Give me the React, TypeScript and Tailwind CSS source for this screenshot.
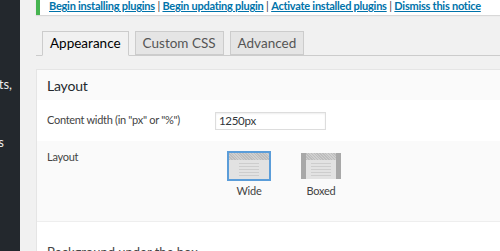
import React from "react"

const font = { fontFamily: 'Lato, "Liberation Sans", sans-serif' }

const Thumb = ({ boxed, active }: { boxed?: boolean; active?: boolean }) => (
  <div
    className={`w-[44px] h-[30px] p-[2px] ${active ? "bg-[#5b9dd9]" : "bg-transparent"}`}
  >
    <div className="relative w-full h-full bg-[#e2e2e2] overflow-hidden">
      {boxed && (
        <>
          <div className="absolute left-0 top-0 bottom-0 w-[5px] bg-[#a8a8a8]" />
          <div className="absolute right-0 top-0 bottom-0 w-[5px] bg-[#a8a8a8]" />
        </>
      )}
      <div
        className={`absolute top-0 h-[7px] bg-[#c4c4c4] ${boxed ? "left-[5px] right-[5px]" : "left-0 right-0"}`}
        style={{
          backgroundImage:
            "repeating-linear-gradient(45deg, #bdbdbd 0 1px, #cfcfcf 1px 2px)",
        }}
      />
      <div className="absolute left-[10px] right-[10px] top-[10px] flex flex-col gap-[2px]">
        {[0, 1, 2, 3, 4].map((i) => (
          <div key={i} className="h-[1px] bg-[#cdcdcd]" />
        ))}
      </div>
    </div>
  </div>
)

export default function App() {
  return (
    <div
      className="flex w-[500px] h-[251px] overflow-hidden bg-[#f1f1f1] text-[#444]"
      style={font}
    >
      {/* admin sidebar edge */}
      <div className="w-[20px] shrink-0 bg-[#23282d] text-[#eee] text-[13px] overflow-hidden">
        <div className="flex justify-end pr-[8px] mt-[75px] whitespace-nowrap">accounts,</div>
        <div className="flex justify-end pr-[16px] mt-[38px] whitespace-nowrap">Settings</div>
      </div>

      <div className="flex-1 min-w-0 pl-[16px]">
        {/* notice */}
        <div className="-mt-[10px] h-[25px] bg-white border-l-4 border-[#46b450] shadow-[0_1px_1px_rgba(0,0,0,0.1)] pl-[9px] flex items-end pb-[4px]">
          <p className="text-[11px] font-bold tracking-[-0.25px] text-[#0073aa] whitespace-nowrap leading-none">
            <span className="underline">Begin installing plugins</span>
            <span className="text-[#444] font-normal"> | </span>
            <span className="underline">Begin updating plugin</span>
            <span className="text-[#444] font-normal"> | </span>
            <span className="underline">Activate installed plugins</span>
            <span className="text-[#444] font-normal"> | </span>
            <span className="underline">Dismiss this notice</span>
          </p>
        </div>

        {/* tabs */}
        <div className="mt-[16px] flex items-end gap-[6px] pl-[6px] border-b border-[#ccc] h-[25px]">
          <div className="h-[25px] px-[7px] border border-[#ccc] border-b-[#f1f1f1] bg-[#f1f1f1] text-[13.5px] text-[#000] flex items-center -mb-px">
            Appearance
          </div>
          <div className="h-[24px] px-[7px] border border-[#ccc] bg-[#e5e5e5] text-[13.5px] text-[#555] flex items-center">
            Custom CSS
          </div>
          <div className="h-[24px] px-[7px] border border-[#ccc] bg-[#e5e5e5] text-[13.5px] text-[#555] flex items-center">
            Advanced
          </div>
        </div>

        {/* options panel */}
        <div className="mt-[13px] bg-white border-t border-l border-[#e5e5e5]">
          <div className="h-[30px] px-[10px] flex items-center bg-[#fafafa] text-[14px] tracking-[-0.2px] text-[#23282d]">
            Layout
          </div>
          <div className="h-[41px] px-[10px] flex items-center bg-white text-[11px] tracking-[-0.3px]">
            <div className="w-[168px] whitespace-nowrap">Content width (in "px" or "%")</div>
            <input
              className="w-[111px] h-[18px] border border-[#ddd] shadow-[inset_0_1px_2px_rgba(0,0,0,0.07)] px-[3px] text-[11.5px] text-[#32373c] outline-none"
              style={font}
              defaultValue="1250px"
            />
          </div>
          <div className="h-[81px] px-[10px] pt-[8px] flex bg-[#fafafa] text-[11px] tracking-[-0.25px] border-b border-[#eee]">
            <div className="w-[180px]">Layout</div>
            <div className="flex gap-[28px] mt-[2px]">
              <div className="flex flex-col items-center gap-[2px]">
                <Thumb active />
                <span className="text-[11px]">Wide</span>
              </div>
              <div className="flex flex-col items-center gap-[2px]">
                <Thumb boxed />
                <span className="text-[11px]">Boxed</span>
              </div>
            </div>
          </div>
          <div className="h-[40px] bg-white px-[10px] pt-[21px] text-[13px]">
            Background under the box
          </div>
        </div>
      </div>
    </div>
  )
}
